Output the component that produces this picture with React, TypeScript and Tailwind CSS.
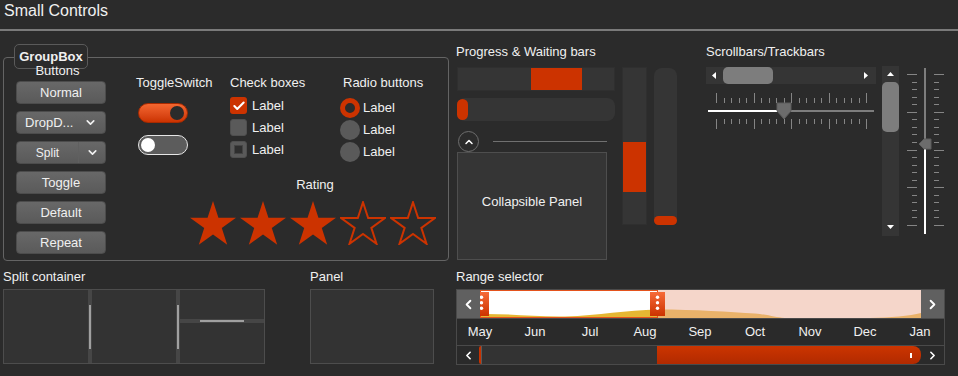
import { Check, ChevronDown, ChevronLeft, ChevronRight, ChevronUp } from 'lucide-react';
import type { ReactNode } from 'react';

const months = ['May', 'Jun', 'Jul', 'Aug', 'Sep', 'Oct', 'Nov', 'Dec', 'Jan'];

function starPoints(w: number, inset: number) {
  const R0 = w / 1.902;
  const R = R0 - inset;
  const r = R * 0.382;
  const pts: string[] = [];
  for (let k = 0; k < 10; k++) {
    const a = ((-90 + 36 * k) * Math.PI) / 180;
    const rad = k % 2 === 0 ? R : r;
    pts.push(`${(w / 2 + rad * Math.cos(a)).toFixed(2)},${(R0 + rad * Math.sin(a)).toFixed(2)}`);
  }
  return pts.join(' ');
}

function Star({ filled }: { filled: boolean }) {
  return (
    <svg width="46" height="44" viewBox="0 0 46 44">
      {filled ? (
        <polygon points={starPoints(46, 0)} fill="#cc3300" />
      ) : (
        <polygon points={starPoints(46, 1.2)} fill="none" stroke="#cc3300" strokeWidth="2" />
      )}
    </svg>
  );
}

function Btn({ children }: { children: ReactNode }) {
  return (
    <div className="h-[23px] w-[90px] rounded-[4px] border border-[#4c4c4c] bg-linear-to-b from-[#686868] to-[#5a5a5a] flex items-center justify-center text-[13px]">
      {children}
    </div>
  );
}

function Label({ children, className = '' }: { children: ReactNode; className?: string }) {
  return <div className={`h-[16px] leading-[16px] text-[13px] whitespace-nowrap ${className}`}>{children}</div>;
}

function Tri({ dir }: { dir: 'l' | 'r' | 'u' | 'd' }) {
  const pts = { l: '4,0 0,3.5 4,7', r: '0,0 4,3.5 0,7', u: '0,4 3.5,0 7,4', d: '0,0 3.5,4 7,0' }[dir];
  const vert = dir === 'u' || dir === 'd';
  return (
    <svg width={vert ? 7 : 4} height={vert ? 4 : 7}>
      <polygon points={pts} fill="#ffffff" />
    </svg>
  );
}

function HTrackbar() {
  const ticks = Array.from({ length: 21 }, (_, i) => i);
  return (
    <svg width="170" height="37" className="mt-[8px]">
      {ticks.map((i) => {
        const x = Math.round(10 + 7.5 * i) + 0.5;
        const major = i % 5 === 0;
        return (
          <g key={i} stroke="#858585" strokeWidth="1">
            <line x1={x} x2={x} y1={major ? 1 : 6} y2={11} />
            <line x1={x} x2={x} y1={27} y2={major ? 37 : 32} />
          </g>
        );
      })}
      <rect x="2" y="18" width="70" height="2" fill="#ffffff" />
      <rect x="85" y="18" width="83" height="2" fill="#7d7d7d" />
      <polygon points="71,11 85,11 85,19 78,27 71,19" fill="#6c6c6c" stroke="#5c5c5c" strokeWidth="1" />
    </svg>
  );
}

function VTrackbar() {
  const ticks = Array.from({ length: 21 }, (_, i) => i);
  return (
    <svg width="37" height="170" className="ml-[8px]">
      {ticks.map((i) => {
        const y = Math.round(8 + 7.55 * i) + 0.5;
        const major = i % 5 === 0;
        return (
          <g key={i} stroke="#858585" strokeWidth="1">
            <line x1={major ? 0 : 5} x2={10} y1={y} y2={y} />
            <line x1={27} x2={major ? 37 : 32} y1={y} y2={y} />
          </g>
        );
      })}
      <rect x="17" y="2" width="2" height="72" fill="#7d7d7d" />
      <rect x="17" y="83" width="2" height="85" fill="#ffffff" />
      <polygon points="12,78 17,73 24,73 24,83 17,83" fill="#6c6c6c" stroke="#5c5c5c" strokeWidth="1" />
    </svg>
  );
}

function RangeChart() {
  return (
    <svg width="441" height="28">
      <defs>
        <linearGradient id="hnd" x1="0" y1="0" x2="0" y2="1">
          <stop offset="0" stopColor="#f66a38" />
          <stop offset="1" stopColor="#cc3300" />
        </linearGradient>
      </defs>
      <rect x="0" y="0" width="441" height="28" fill="#f5d6ca" />
      <rect x="0" y="0" width="178" height="28" fill="#ffffff" />
      <path d="M0,28 L0,24 C30,23.5 55,27 85,26.5 C120,25.5 145,20 178,19.5 L178,28 Z" fill="#e5b733" />
      <path d="M178,28 L178,19.5 C215,19.5 250,22 275,23.5 C290,25 295,27.5 305,28 Z" fill="#e9b26a" />
      <path d="M390,28 C410,27.5 430,26 441,23 L441,28 Z" fill="#e9b26a" />
      <rect x="0.5" y="0.5" width="177" height="27" fill="none" stroke="#e4521c" strokeWidth="1" />
      <rect x="-6" y="2" width="15" height="24" fill="url(#hnd)" />
      <rect x="170" y="2" width="15" height="24" fill="url(#hnd)" />
      {[7.3, 12.7, 18.3].map((y) => (
        <g key={y} fill="#ffffff">
          <circle cx="1.5" cy={y} r="1.7" />
          <circle cx="177.5" cy={y} r="1.7" />
        </g>
      ))}
    </svg>
  );
}

export default function App() {
  return (
    <div className="w-[958px] h-[376px] overflow-hidden bg-[#2b2b2b] text-[#f0f0f0] font-['Liberation_Sans',Arial,sans-serif]">
      <div className="h-[29px] pl-[4px] pt-[1px] text-[16px] leading-[20px]">Small Controls</div>
      <div className="h-[2px] bg-[#7a7a7a]" />

      {/* top section */}
      <div className="flex items-start h-[230px]">
        {/* group box */}
        <div className="relative ml-[3px] mt-[26px] w-[446px] h-[204px] rounded-[4px] border border-[#646464] flex items-start">
          <div className="absolute left-[10px] top-[-14px] w-[74px] h-[25px] rounded-[5px] border border-[#5a5a5a] bg-[#2b2b2b] text-[13px] font-bold flex items-center justify-center">
            GroupBox
          </div>
          <div className="ml-[12px] mt-[5px] w-[90px] flex flex-col">
            <Label className="relative text-center pr-[7px]">Buttons</Label>
            <div className="mt-[2px] flex flex-col gap-[7px]">
              <Btn>Normal</Btn>
              <div className="h-[23px] w-[90px] rounded-[4px] border border-[#4c4c4c] bg-linear-to-b from-[#686868] to-[#5a5a5a] flex items-center justify-between pl-[8px] pr-[8px] text-[13px]">
                <span>DropD...</span>
                <ChevronDown size={13} strokeWidth={3} />
              </div>
              <div className="h-[23px] w-[90px] rounded-[4px] border border-[#4c4c4c] bg-linear-to-b from-[#686868] to-[#5a5a5a] flex items-center text-[12px]">
                <span className="w-[61px] text-center">Split</span>
                <div className="w-px h-full bg-[#606060]" />
                <div className="flex-1 flex justify-center">
                  <ChevronDown size={13} strokeWidth={3} />
                </div>
              </div>
              <Btn>Toggle</Btn>
              <Btn>Default</Btn>
              <Btn>Repeat</Btn>
            </div>
          </div>

          <div className="ml-[30px] mt-[17px] flex flex-col">
            <div className="flex items-start">
              <div className="w-[94px] flex flex-col">
                <Label>ToggleSwitch</Label>
                <div className="ml-[2px] mt-[12px] w-[50px] h-[20px] rounded-full border border-[#a82a00] bg-linear-to-b from-[#f4662f] to-[#cc3300] flex items-center justify-end pr-[3px]">
                  <div className="w-[14px] h-[14px] rounded-full bg-[#2b2b2b]" />
                </div>
                <div className="ml-[2px] mt-[12px] w-[50px] h-[20px] rounded-full border-[1.5px] border-[#e6e6e6] bg-[#5c5c5c] flex items-center pl-[2px]">
                  <div className="w-[14px] h-[14px] rounded-full bg-white" />
                </div>
              </div>
              <div className="w-[110px] flex flex-col">
                <Label>Check boxes</Label>
                <div className="mt-[6px] flex flex-col gap-[5px]">
                  <div className="flex items-center h-[17px]">
                    <div className="w-[17px] h-[17px] rounded-[3px] bg-[#cc3300] flex items-center justify-center">
                      <Check size={14} strokeWidth={3.5} color="#ffffff" />
                    </div>
                    <span className="ml-[5px] text-[13px]">Label</span>
                  </div>
                  <div className="flex items-center h-[17px]">
                    <div className="w-[17px] h-[17px] rounded-[3px] bg-[#5a5a5a] border border-[#4f4f4f]" />
                    <span className="ml-[5px] text-[13px]">Label</span>
                  </div>
                  <div className="flex items-center h-[17px]">
                    <div className="w-[17px] h-[17px] rounded-[3px] bg-[#5a5a5a] border border-[#4f4f4f] flex items-center justify-center">
                      <div className="w-[9px] h-[9px] bg-[#2e2e2e] border border-[#444444]" />
                    </div>
                    <span className="ml-[5px] text-[13px]">Label</span>
                  </div>
                </div>
              </div>
              <div className="flex flex-col">
                <Label className="ml-[3px]">Radio buttons</Label>
                <div className="mt-[7px] flex flex-col gap-[2px]">
                  <div className="flex items-center h-[20px]">
                    <div className="w-[20px] h-[20px] rounded-full border-[5px] border-[#cc3300] bg-[#2b2b2b]" />
                    <span className="ml-[3px] text-[13px]">Label</span>
                  </div>
                  <div className="flex items-center h-[20px]">
                    <div className="w-[20px] h-[20px] rounded-full bg-[#5a5a5a]" />
                    <span className="ml-[3px] text-[13px]">Label</span>
                  </div>
                  <div className="flex items-center h-[20px]">
                    <div className="w-[20px] h-[20px] rounded-full bg-[#5a5a5a]" />
                    <span className="ml-[3px] text-[13px]">Label</span>
                  </div>
                </div>
              </div>
            </div>
            <div className="ml-[54px] mt-[15px] flex flex-col">
              <Label className="w-[245px] text-center pl-[5px]">Rating</Label>
              <div className="mt-[8px] flex gap-[4px]">
                <Star filled />
                <Star filled />
                <Star filled />
                <Star filled={false} />
                <Star filled={false} />
              </div>
            </div>
          </div>
        </div>

        {/* progress & waiting */}
        <div className="ml-[7px] flex flex-col">
          <Label className="mt-[13px]">Progress &amp; Waiting bars</Label>
          <div className="mt-[7px] flex items-start">
            <div className="ml-[1px] w-[158px] flex flex-col">
              <div className="h-[24px] bg-[#353535] border border-[#2f2f2f] flex">
                <div className="ml-[73px] w-[51px] bg-[#cc3300]" />
              </div>
              <div className="mt-[7px] h-[23px] rounded-[8px] bg-[#353535] flex py-[1px]">
                <div className="w-[11px] rounded-[8px] bg-[#cc3300]" />
              </div>
              <div className="mt-[10px] h-[21px] flex items-center">
                <div className="ml-[1px] w-[21px] h-[21px] rounded-full border border-[#6e6e6e] flex items-center justify-center">
                  <ChevronUp size={12} strokeWidth={3} color="#ffffff" />
                </div>
                <div className="ml-[14px] w-[114px] h-px bg-[#707070]" />
              </div>
              <div className="w-[150px] h-[108px] border border-[#4e4e4e] bg-[#353535] flex items-center justify-center pb-[8px] text-[13px]">
                Collapsible Panel
              </div>
            </div>
            <div className="ml-[7px] w-[25px] h-[158px] bg-[#353535] border border-[#2f2f2f] flex flex-col">
              <div className="mt-[74px] h-[50px] bg-[#cc3300]" />
            </div>
            <div className="ml-[7px] mt-[1px] w-[23px] h-[157px] rounded-[8px] bg-[#353535] flex flex-col justify-end">
              <div className="h-[9px] rounded-[5px] bg-[#cc3300]" />
            </div>
          </div>
        </div>

        {/* scrollbars / trackbars */}
        <div className="ml-[29px] flex flex-col">
          <Label className="mt-[13px]">Scrollbars/Trackbars</Label>
          <div className="mt-[6px] flex items-start">
            <div className="mt-[1px] w-[170px] flex flex-col">
              <div className="h-[17px] bg-[#353535] flex items-center">
                <div className="ml-[6px] flex"><Tri dir="l" /></div>
                <div className="ml-[7px] w-[50px] h-full rounded-[5px] bg-[#7d7d7d]" />
                <div className="flex-1" />
                <div className="mr-[8px] flex"><Tri dir="r" /></div>
              </div>
              <HTrackbar />
            </div>
            <div className="ml-[6px] w-[17px] h-[170px] bg-[#353535] flex flex-col items-center">
              <div className="mt-[6px] flex"><Tri dir="u" /></div>
              <div className="mt-[6px] w-full h-[50px] rounded-[5px] bg-[#7d7d7d]" />
              <div className="flex-1" />
              <div className="mb-[7px] flex"><Tri dir="d" /></div>
            </div>
            <VTrackbar />
          </div>
        </div>
      </div>

      {/* bottom section */}
      <div className="mt-[8px] flex items-start">
        <div className="ml-[3px] flex flex-col">
          <Label>Split container</Label>
          <div className="mt-[4px] w-[262px] h-[75px] border border-[#4d4d4d] flex">
            <div className="w-[84px] bg-[#333333]" />
            <div className="w-[4px] bg-[#464646] flex items-center justify-center">
              <div className="w-[2px] h-[44px] bg-[#a0a0a0]" />
            </div>
            <div className="w-[84px] bg-[#333333]" />
            <div className="w-[4px] bg-[#464646] flex items-center justify-center">
              <div className="w-[2px] h-[44px] bg-[#a0a0a0]" />
            </div>
            <div className="flex-1 flex flex-col">
              <div className="h-[29px] bg-[#333333]" />
              <div className="h-[4px] bg-[#464646] flex items-center justify-center">
                <div className="w-[44px] h-[2px] bg-[#a0a0a0]" />
              </div>
              <div className="flex-1 bg-[#333333]" />
            </div>
          </div>
        </div>

        <div className="ml-[45px] flex flex-col">
          <Label>Panel</Label>
          <div className="mt-[4px] w-[124px] h-[75px] border border-[#4d4d4d] bg-[#333333]" />
        </div>

        <div className="ml-[22px] flex flex-col">
          <Label>Range selector</Label>
          <div className="mt-[4px] w-[489px] h-[76px] border border-[#4a4a4a] flex flex-col overflow-hidden">
            <div className="h-[28px] flex">
              <div className="w-[23px] bg-[#606060] flex items-center justify-center">
                <ChevronLeft size={15} strokeWidth={3} color="#ffffff" />
              </div>
              <RangeChart />
              <div className="w-[23px] bg-[#606060] flex items-center justify-center">
                <ChevronRight size={15} strokeWidth={3} color="#ffffff" />
              </div>
            </div>
            <div className="h-[27px] border-t border-[#4a4a4a] bg-[#2a2a2a] flex items-center overflow-hidden">
              <div className="ml-[-4.5px] flex">
                {months.map((m) => (
                  <div key={m} className="w-[55px] shrink-0 text-center text-[13px] leading-[16px]">
                    {m}
                  </div>
                ))}
              </div>
            </div>
            <div className="h-[19px] border-t border-[#4a4a4a] bg-[#2a2a2a] flex">
              <div className="w-[22px] flex items-center justify-center">
                <ChevronLeft size={13} strokeWidth={3} color="#ffffff" />
              </div>
              <div className="w-[2px] rounded-l-[2px] bg-[#c83200]" />
              <div className="w-px bg-[#5a5a5a]" />
              <div className="w-[175px] bg-[#333333]" />
              <div className="w-[264px] rounded-r-[8px] bg-linear-to-b from-[#cc3500] to-[#b12a00] flex items-center justify-end pr-[9px]">
                <div className="w-[2px] h-[5px] bg-white" />
              </div>
              <div className="flex-1 flex items-center justify-center">
                <ChevronRight size={13} strokeWidth={3} color="#ffffff" />
              </div>
            </div>
          </div>
        </div>
      </div>
    </div>
  );
}
